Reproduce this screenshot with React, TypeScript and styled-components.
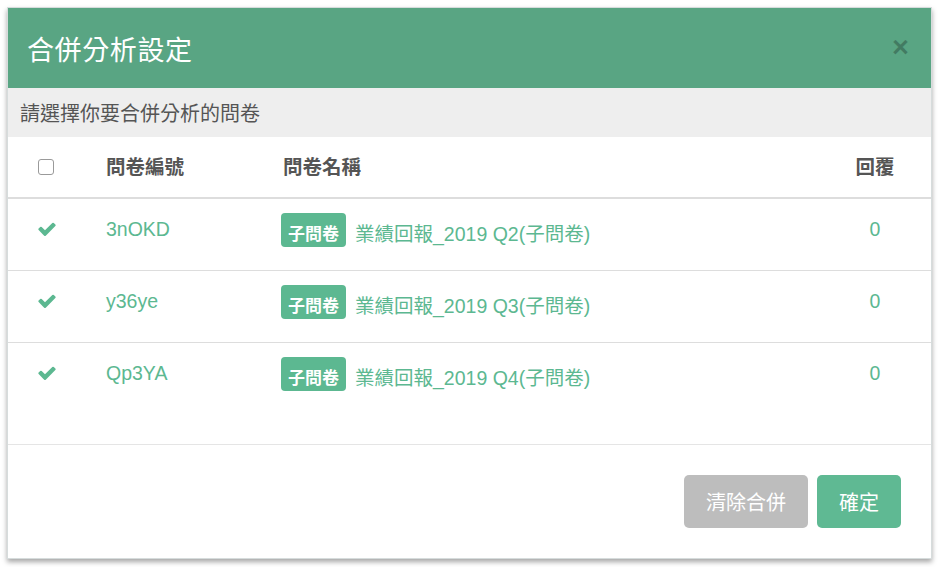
import { createGlobalStyle, styled } from "styled-components";

const GlobalStyle = createGlobalStyle`
	html, body {
		margin: 0;
		padding: 0;
		background: #ffffff;
	}
	body {
		font-family: "Liberation Sans", "Noto Sans CJK TC", sans-serif;
		color: #555555;
	}
`;

const rows = [
	{ id: "3nOKD", title: "業績回報_2019 Q2(子問卷)", replies: 0 },
	{ id: "y36ye", title: "業績回報_2019 Q3(子問卷)", replies: 0 },
	{ id: "Qp3YA", title: "業績回報_2019 Q4(子問卷)", replies: 0 },
];

const CheckIcon = () => (
	<svg width="20" height="20" viewBox="0 0 1792 1792" fill="#5cb891">
		<path d="M1671 566q0 40-28 68l-724 724-136 136q-28 28-68 28t-68-28l-136-136-362-362q-28-28-28-68t28-68l136-136q28-28 68-28t68 28l294 295 656-657q28-28 68-28t68 28l136 136q28 28 28 68z" />
	</svg>
);

const App = () => {
	return (
		<Page>
			<GlobalStyle />
			<Modal>
				<Header>
					<Title>合併分析設定</Title>
					<Close>×</Close>
				</Header>
				<Intro>請選擇你要合併分析的問卷</Intro>
				<Body>
					<HeadRow>
						<Cell>
							<Checkbox />
						</Cell>
						<Cell>問卷編號</Cell>
						<Cell>問卷名稱</Cell>
						<Cell $center>回覆</Cell>
					</HeadRow>
					{rows.map((r) => (
						<Row key={r.id}>
							<Cell>
								<CheckIcon />
							</Cell>
							<Cell>{r.id}</Cell>
							<NameCell>
								<Badge>子問卷</Badge>
								<span>{r.title}</span>
							</NameCell>
							<Cell $center>{r.replies}</Cell>
						</Row>
					))}
				</Body>
				<Footer>
					<Button $variant="gray">清除合併</Button>
					<Button>確定</Button>
				</Footer>
			</Modal>
		</Page>
	);
};

export default App;

const Page = styled.div`
	padding: 7px 8px 8px 7px;
	width: 940px;
	box-sizing: border-box;
`;

const Modal = styled.div`
	background: #ffffff;
	border: 1px solid #d6dcdc;
	box-shadow: 0 3px 5px rgba(0, 0, 0, 0.35);
`;

const Header = styled.div`
	height: 80px;
	background: #59a583;
	display: flex;
	align-items: center;
	justify-content: space-between;
	padding: 0 22px 0 19px;
`;

const Title = styled.h1`
	margin: 0;
	font-size: 27px;
	font-weight: 400;
	color: #ffffff;
	letter-spacing: 0.6px;
`;

const Close = styled.span`
	font-size: 29px;
	font-weight: 700;
	color: rgba(0, 0, 0, 0.25);
	line-height: 1;
	margin-top: -2px;
`;

const Intro = styled.div`
	height: 49px;
	background: #eeeeee;
	display: flex;
	align-items: center;
	padding: 0 12px;
	font-size: 20px;
	color: #555555;
`;

const Body = styled.div`
	padding-bottom: 30px;
`;

const HeadRow = styled.div`
	display: grid;
	grid-template-columns: 69px 177px 1fr 60px;
	align-items: center;
	height: 60px;
	padding: 0 26px 0 29px;
	border-bottom: 2px solid #dddddd;
	font-size: 19.5px;
	font-weight: 700;
	color: #555555;
`;

const Row = styled.div`
	display: grid;
	grid-template-columns: 69px 177px 1fr 60px;
	align-items: start;
	height: 72px;
	padding: 19px 26px 0 29px;
	box-sizing: border-box;
	border-bottom: 1px solid #dddddd;
	font-size: 19.5px;
	color: #5cb891;
	&:last-child {
		border-bottom: none;
		height: 71px;
	}
`;

const Cell = styled.div<{ $center?: boolean }>`
	display: flex;
	align-items: center;
	justify-content: ${(p) => (p.$center ? "center" : "flex-start")};
	min-height: 22px;
	line-height: 22px;
`;

const NameCell = styled.div`
	display: flex;
	align-items: center;
	gap: 9px;
	margin-left: -2px;
	margin-top: -5px;
	& > span {
		padding-top: 5px;
	}
`;

const Badge = styled.span`
	display: inline-flex;
	align-items: center;
	height: 29px;
	padding: 0 7px;
	border-radius: 4px;
	background: #5cb891;
	color: #ffffff;
	font-size: 17px;
	font-weight: 700;
`;

const Checkbox = styled.span`
	display: block;
	box-sizing: border-box;
	margin-left: 1px;
	width: 16px;
	height: 16px;
	border: 1px solid #9a9a9a;
	border-radius: 3px;
	background: #ffffff;
`;

const Footer = styled.div`
	border-top: 1px solid #e5e5e5;
	display: flex;
	justify-content: flex-end;
	gap: 9px;
	padding: 30px 30px 30px 0;
`;

const Button = styled.button<{ $variant?: "gray" }>`
	height: 53px;
	padding: 0 22px;
	border: none;
	border-radius: 5px;
	background: ${(p) => (p.$variant === "gray" ? "#bdbdbd" : "#5fb993")};
	color: #ffffff;
	font-family: inherit;
	font-size: 20px;
	cursor: pointer;
`;
